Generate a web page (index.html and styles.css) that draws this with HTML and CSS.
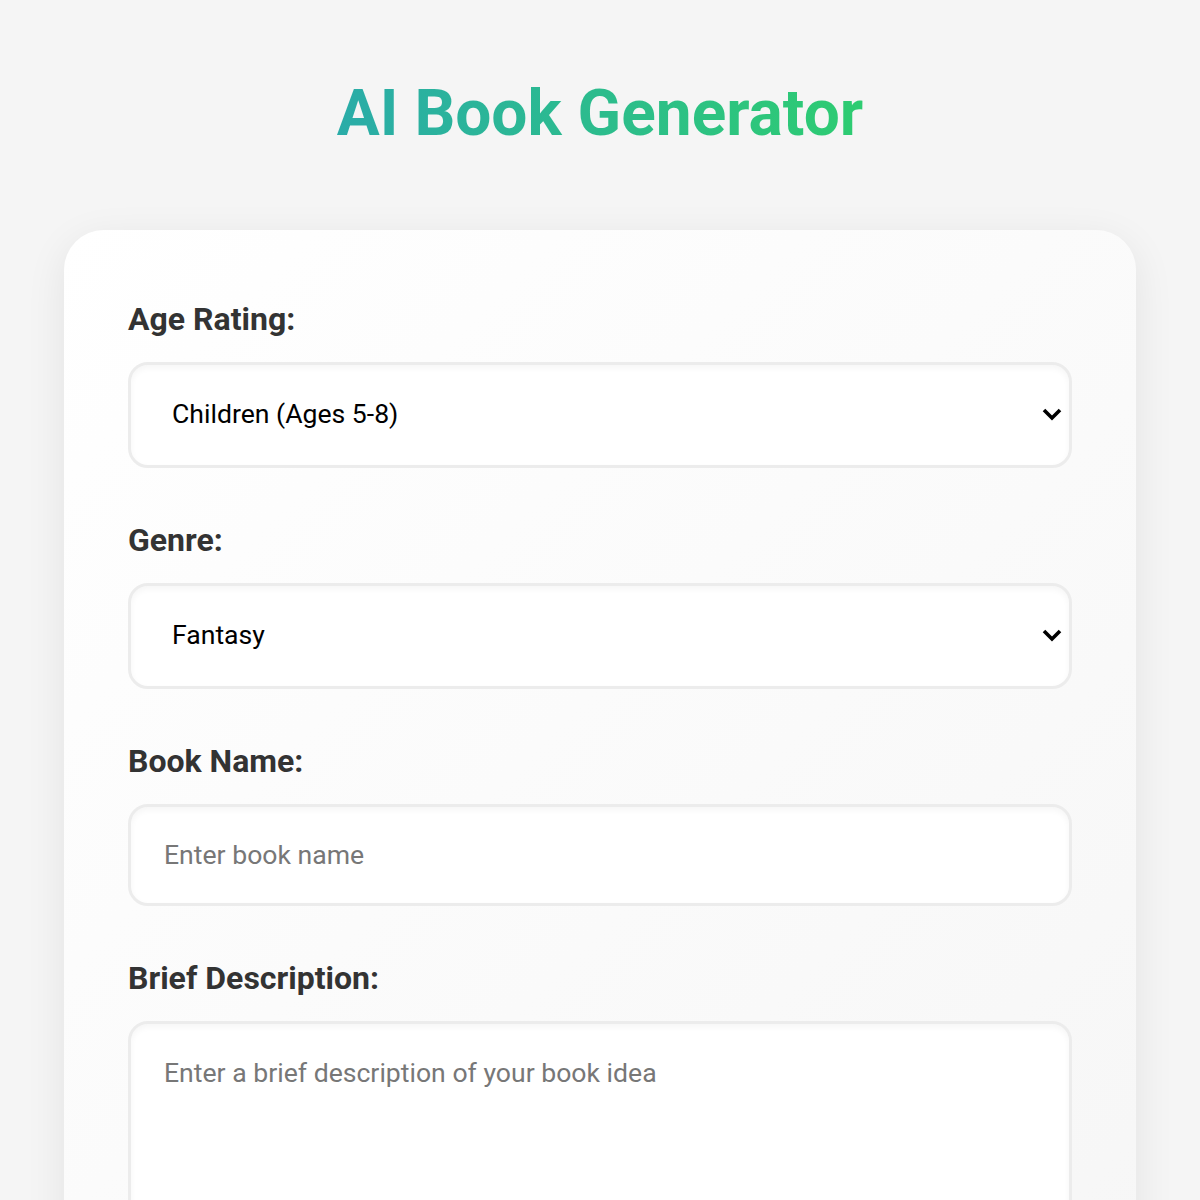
FILE: index.html
```html
<!DOCTYPE html>
<html lang="en">
<head>
<meta charset="UTF-8" />
<meta name="viewport" content="width=device-width, initial-scale=1" />
<title>AI Book Generator</title>
<link rel="stylesheet" href="styles.css">
</head>
<body>

<h1 class="title">AI Book Generator</h1>

<div class="card">
  <form id="bookForm">
    <div class="field">
      <label for="age">Age Rating:</label>
      <div class="select-wrap">
        <select id="age">
          <option>Children (Ages 5-8)</option>
          <option>Middle Grade (Ages 9-12)</option>
          <option>Young Adult (Ages 13-17)</option>
          <option>Adult (18+)</option>
        </select>
        <svg class="chevron" width="20" height="13" viewBox="0 0 20 13"><polyline points="2,2 10,10 18,2" fill="none" stroke="#000" stroke-width="3.6"/></svg>
      </div>
    </div>

    <div class="field">
      <label for="genre">Genre:</label>
      <div class="select-wrap">
        <select id="genre">
          <option>Fantasy</option>
          <option>Science Fiction</option>
          <option>Mystery</option>
          <option>Adventure</option>
        </select>
        <svg class="chevron" width="20" height="13" viewBox="0 0 20 13"><polyline points="2,2 10,10 18,2" fill="none" stroke="#000" stroke-width="3.6"/></svg>
      </div>
    </div>

    <div class="field">
      <label for="bookName">Book Name:</label>
      <input type="text" id="bookName" placeholder="Enter book name" />
    </div>

    <div class="field">
      <label for="description">Brief Description:</label>
      <textarea id="description" placeholder="Enter a brief description of your book idea"></textarea>
    </div>
  </form>
</div>

</body>
</html>
```

FILE: styles.css
```css
body {
  font-family: Roboto, "Liberation Sans", Arial, sans-serif;
  background: #f5f5f5;
  margin: 0;
  padding: 75px 64px 40px;
}
.title {
  margin: 0 auto 78px;
  width: max-content;
  text-align: center;
  font-size: 64px;
  line-height: 77px;
  font-weight: 700;
  background: linear-gradient(90deg, #2aaca8, #2ecc71);
  -webkit-background-clip: text;
  background-clip: text;
  color: transparent;
}
.card {
  background: linear-gradient(135deg, #ffffff, #f6f6f6);
  border-radius: 40px;
  padding: 72px 64px 64px;
  box-shadow: 0 10px 40px rgba(0,0,0,0.08);
}
.field {
  margin-bottom: 55px;
}
label {
  display: block;
  font-size: 32px;
  line-height: 34px;
  font-weight: 700;
  color: #333;
  margin-bottom: 26px;
}
select, input[type="text"], textarea {
  display: block;
  width: 100%;
  box-sizing: border-box;
  border: 3px solid #ececec;
  border-radius: 20px;
  background: #fff;
  box-shadow: inset 0 3px 6px rgba(0,0,0,0.04);
  font-family: Roboto, "Liberation Sans", Arial, sans-serif;
  font-size: 26.6px;
  color: #000;
  outline: none;
}
.select-wrap {
  position: relative;
}
select {
  -webkit-appearance: none;
  appearance: none;
  height: 106px;
  padding: 0 50px 4px 41px;
}
.chevron {
  position: absolute;
  right: 10px;
  top: 46px;
  pointer-events: none;
}
input[type="text"] {
  height: 102px;
  padding: 0 33px 2px;
}
textarea {
  height: 240px;
  padding: 33px 33px;
  resize: vertical;
}
::placeholder {
  color: #777;
}
```
